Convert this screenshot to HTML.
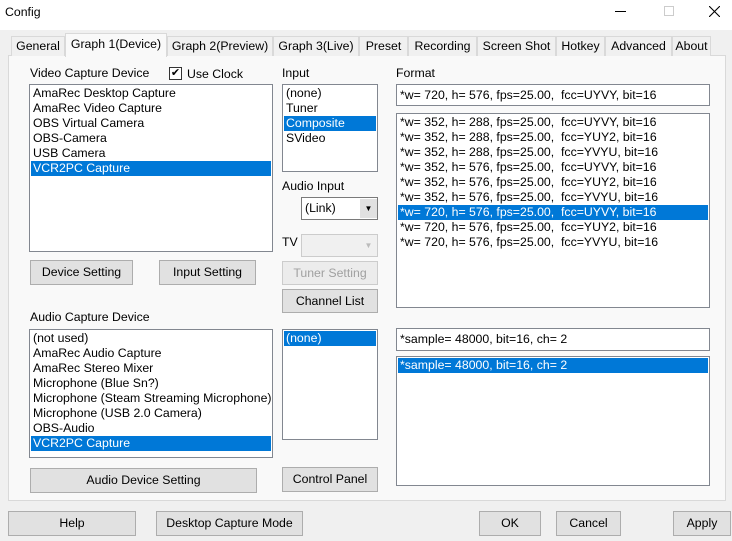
<!DOCTYPE html><html><head><style>
*{box-sizing:border-box;margin:0;padding:0}
body{width:732px;height:541px;background:#f0f0f0;font-family:"Liberation Sans",sans-serif;font-size:12.3px;color:#000;position:relative;overflow:hidden}
.a{position:absolute}
.title{left:0;top:0;width:732px;height:30px;background:#fff}
.lst{position:absolute;background:#fff;border:1px solid #828790;padding:1px 1px;line-height:15px;white-space:nowrap;overflow:hidden}
.lst div{height:15px;padding-left:2px}
.sel{background:#0078d7;color:#fff}
.btn{position:absolute;background:#e1e1e1;border:1px solid #adadad;text-align:center;line-height:22px}
.tab{position:absolute;top:36px;height:20px;border:1px solid #d9d9d9;border-bottom:none;background:#f0f0f0;text-align:center;line-height:18px}
.lbl{position:absolute;white-space:nowrap}
</style></head><body>
<div class="a title"></div>
<div class="lbl" style="left:5px;top:5px">Config</div>
<div class="a" style="left:615px;top:11px;width:11px;height:1px;background:#000"></div>
<div class="a" style="left:664px;top:6px;width:10px;height:10px;border:1px solid #ccc"></div>
<svg class="a" style="left:709px;top:6px" width="11" height="11"><path d="M0 0L11 11M11 0L0 11" stroke="#000" stroke-width="1.1"/></svg>
<div class="a" style="left:8px;top:55px;width:718px;height:446px;border:1px solid #d9d9d9;background:#f9f9f9"></div>
<div class="tab" style="left:11px;width:54px">General</div>
<div class="tab" style="left:65px;top:33px;height:24px;width:102px;background:#f9f9f9;line-height:20px">Graph 1(Device)</div>
<div class="tab" style="left:167px;width:106px">Graph 2(Preview)</div>
<div class="tab" style="left:273px;width:86px">Graph 3(Live)</div>
<div class="tab" style="left:359px;width:49px">Preset</div>
<div class="tab" style="left:408px;width:69px">Recording</div>
<div class="tab" style="left:477px;width:79px">Screen Shot</div>
<div class="tab" style="left:556px;width:49px">Hotkey</div>
<div class="tab" style="left:605px;width:67px">Advanced</div>
<div class="tab" style="left:672px;width:39px">About</div>

<div class="lbl" style="left:30px;top:66px">Video Capture Device</div>
<div class="a" style="left:169px;top:67px;width:13px;height:13px;border:1px solid #333;background:#fff;font-size:11px;line-height:11px;text-align:center">&#10004;</div>
<div class="lbl" style="left:187px;top:67px">Use Clock</div>
<div class="lbl" style="left:282px;top:66px">Input</div>
<div class="lbl" style="left:396px;top:66px">Format</div>

<div class="lst" style="left:29px;top:84px;width:244px;height:168px"><div>AmaRec Desktop Capture</div><div>AmaRec Video Capture</div><div>OBS Virtual Camera</div><div>OBS-Camera</div><div>USB Camera</div><div class="sel">VCR2PC Capture</div></div>
<div class="lst" style="left:282px;top:84px;width:96px;height:88px"><div>(none)</div><div>Tuner</div><div class="sel">Composite</div><div>SVideo</div></div>
<div class="lst" style="left:396px;top:84px;width:314px;height:22px;line-height:18px;padding-left:3px">*w= 720, h= 576, fps=25.00,&nbsp; fcc=UYVY, bit=16</div>
<div class="lst" style="left:396px;top:113px;width:314px;height:195px;padding-top:1px"><div>*w= 352, h= 288, fps=25.00,&nbsp; fcc=UYVY, bit=16</div><div>*w= 352, h= 288, fps=25.00,&nbsp; fcc=YUY2, bit=16</div><div>*w= 352, h= 288, fps=25.00,&nbsp; fcc=YVYU, bit=16</div><div>*w= 352, h= 576, fps=25.00,&nbsp; fcc=UYVY, bit=16</div><div>*w= 352, h= 576, fps=25.00,&nbsp; fcc=YUY2, bit=16</div><div>*w= 352, h= 576, fps=25.00,&nbsp; fcc=YVYU, bit=16</div><div class="sel">*w= 720, h= 576, fps=25.00,&nbsp; fcc=UYVY, bit=16</div><div>*w= 720, h= 576, fps=25.00,&nbsp; fcc=YUY2, bit=16</div><div>*w= 720, h= 576, fps=25.00,&nbsp; fcc=YVYU, bit=16</div></div>

<div class="lbl" style="left:282px;top:179px">Audio Input</div>
<div class="a" style="left:301px;top:197px;width:77px;height:23px;border:1px solid #7a7a7a;background:#fff;padding:3px 0 0 3px">(Link)<div class="a" style="left:58px;top:1px;width:17px;height:19px;background:#e1e1e1;font-size:8px;text-align:center;line-height:19px">&#9660;</div></div>
<div class="lbl" style="left:282px;top:235px">TV</div>
<div class="a" style="left:301px;top:234px;width:77px;height:23px;border:1px solid #ccc;background:#f0f0f0"><div class="a" style="left:58px;top:1px;width:17px;height:19px;font-size:8px;color:#bbb;text-align:center;line-height:19px">&#9660;</div></div>

<div class="btn" style="left:30px;top:260px;width:103px;height:25px">Device Setting</div>
<div class="btn" style="left:159px;top:260px;width:97px;height:25px">Input Setting</div>
<div class="btn" style="left:282px;top:261px;width:96px;height:24px;color:#a0a0a0;border-color:#ccc;background:#ececec">Tuner Setting</div>
<div class="btn" style="left:282px;top:289px;width:96px;height:24px">Channel List</div>

<div class="lbl" style="left:30px;top:310px">Audio Capture Device</div>
<div class="lst" style="left:29px;top:329px;width:244px;height:129px"><div>(not used)</div><div>AmaRec Audio Capture</div><div>AmaRec Stereo Mixer</div><div>Microphone (Blue Sn?)</div><div>Microphone (Steam Streaming Microphone)</div><div>Microphone (USB 2.0 Camera)</div><div>OBS-Audio</div><div class="sel">VCR2PC Capture</div></div>
<div class="lst" style="left:282px;top:329px;width:96px;height:111px"><div class="sel">(none)</div></div>
<div class="lst" style="left:396px;top:328px;width:314px;height:23px;line-height:19px;padding-left:3px">*sample= 48000, bit=16, ch= 2</div>
<div class="lst" style="left:396px;top:356px;width:314px;height:130px;padding-top:1px"><div class="sel">*sample= 48000, bit=16, ch= 2</div></div>

<div class="btn" style="left:30px;top:468px;width:227px;height:25px">Audio Device Setting</div>
<div class="btn" style="left:282px;top:467px;width:96px;height:25px">Control Panel</div>

<div class="btn" style="left:8px;top:511px;width:128px;height:25px">Help</div>
<div class="btn" style="left:156px;top:511px;width:147px;height:25px">Desktop Capture Mode</div>
<div class="btn" style="left:479px;top:511px;width:62px;height:25px">OK</div>
<div class="btn" style="left:556px;top:511px;width:65px;height:25px">Cancel</div>
<div class="btn" style="left:673px;top:511px;width:58px;height:25px">Apply</div>
</body></html>
